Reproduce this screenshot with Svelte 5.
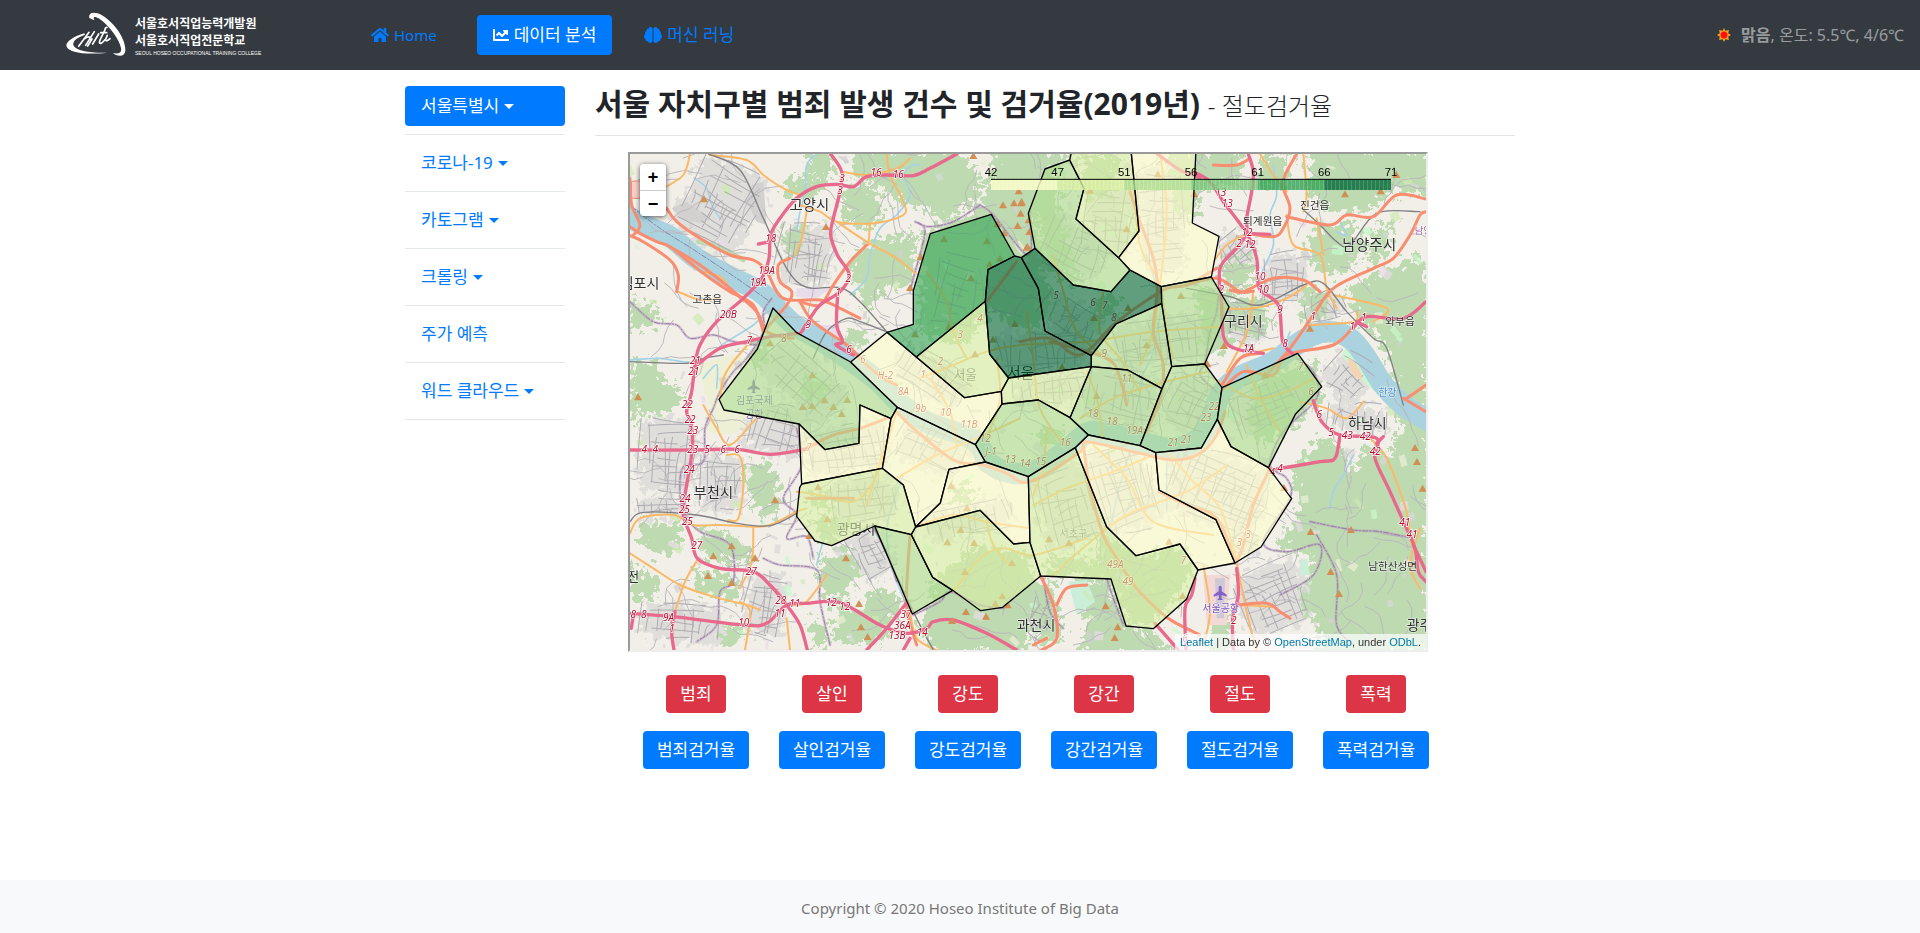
<script>
  const menu = [
    { label: '서울특별시', caret: true, active: true },
    { label: '코로나-19', caret: true },
    { label: '카토그램', caret: true },
    { label: '크롤링', caret: true },
    { label: '주가 예측' },
    { label: '워드 클라우드', caret: true }
  ];
  const crimes = ['범죄', '살인', '강도', '강간', '절도', '폭력'];

  // Map canvas: three units per screen pixel.
  const palette = ['#ffffcc', '#d9f0a3', '#addd8e', '#78c679', '#31a354', '#006837'];
  const ticks = [42, 47, 51, 56, 61, 66, 71];

  const districts = [
    { c: 2, p: '459,489 530,563 692,651 832,787 813,821 720,780 717,895 615,914 537,837 312,795 297,763 412,612' },
    { c: 0, p: '801,562 889,636 1034,758 1144,739 1146,777 1066,899 832,787 692,651' },
    { c: 4, p: '931,266 1114,208 1184,333 1104,374 1096,469 889,636 801,562 880,538 880,437' },
    { c: 1, p: '1096,469 1109,627 1166,699 1144,739 1034,758 889,636' },
    { c: 5, p: '1184,333 1204,338 1255,430 1275,558 1414,632 1414,665 1166,699 1109,627 1096,469 1104,374' },
    { c: 5, p: '1245,310 1360,420 1473,440 1530,375 1624,425 1625,476 1488,537 1414,632 1275,558 1255,430 1204,338' },
    { c: 2, p: '1349,45 1392,130 1368,222 1496,338 1530,375 1473,440 1360,420 1245,310 1225,205 1275,72' },
    { c: 1, p: '1349,45 1356,15 1533,15 1541,95 1557,258 1496,338 1368,222 1392,130' },
    { c: 0, p: '1533,15 1541,95 1557,258 1496,338 1530,375 1624,425 1774,396 1797,274 1717,234 1728,15' },
    { c: 2, p: '1624,425 1774,396 1827,486 1754,657 1655,665 1625,476' },
    { c: 2, p: '1625,476 1655,665 1626,731 1523,675 1414,665 1414,632 1488,537' },
    { c: 2, p: '1414,665 1523,675 1626,731 1560,902 1405,870 1350,818' },
    { c: 2, p: '1655,665 1754,657 1806,728 1792,823 1744,909 1607,923 1560,902 1626,731' },
    { c: 2, p: '1806,728 2033,625 2105,725 2026,808 1945,968 1833,905 1792,823' },
    { c: 1, p: '1166,699 1414,665 1350,818 1255,765 1146,777 1144,739' },
    { c: 2, p: '1146,777 1255,765 1350,818 1405,870 1366,908 1225,995 1096,951 1066,899' },
    { c: 0, p: '720,780 813,821 787,970 545,1017 537,837 615,914 717,895' },
    { c: 0, p: '832,787 1066,899 1096,951 987,973 961,1074 887,1146 850,1020 787,970 813,821' },
    { c: 1, p: '545,1017 787,970 850,1020 887,1146 874,1169 764,1143 635,1202 585,1188 530,1114 539,1028' },
    { c: 2, p: '764,1143 874,1169 938,1297 998,1336 877,1407' },
    { c: 0, p: '987,973 1096,951 1225,995 1230,1192 1181,1197 1080,1096 887,1146 961,1074' },
    { c: 1, p: '887,1146 1080,1096 1181,1197 1230,1192 1262,1293 1148,1387 1082,1397 998,1336 938,1297 874,1169' },
    { c: 1, p: '1225,995 1366,908 1460,1145 1548,1232 1680,1197 1734,1275 1700,1362 1600,1451 1518,1443 1473,1302 1262,1293 1230,1192' },
    { c: 0, p: '1366,908 1405,870 1560,902 1607,923 1617,1035 1788,1124 1845,1254 1734,1275 1680,1197 1548,1232 1460,1145' },
    { c: 0, p: '1607,923 1744,909 1792,823 1833,905 1945,968 2015,1061 1923,1206 1845,1254 1788,1124 1617,1035' }
  ];

  const forests = [
    '555,10 632,10 640,90 600,110 560,70',
    '480,130 560,80 610,120 590,160 500,170',
    '690,10 1010,10 1090,90 1070,160 980,230 900,190 840,170 770,120 700,90',
    '670,110 760,130 800,190 740,260 670,220',
    '1130,10 1370,10 1280,100 1240,230 1300,480 1240,570 1120,500 1040,600 900,560 905,270 1080,190',
    '480,260 560,240 545,330 500,340',
    '790,280 890,260 870,430 800,420 740,500 700,420 690,330',
    '670,560 740,540 740,600 680,620',
    '30,640 100,650 130,700 200,760 130,810 60,800 30,850',
    '30,460 90,480 130,520 60,560 30,540',
    '380,600 440,560 450,640 410,670',
    '560,690 640,720 600,770 540,760',
    '1230,100 1320,80 1310,190 1350,300 1380,420 1280,380',
    '1380,30 1500,30 1470,160 1390,170',
    '1640,20 1870,20 1850,110 1760,130 1720,240 1660,180',
    '1920,30 2010,30 1990,120 1920,140',
    '2070,10 2430,10 2430,150 2320,140 2240,200 2120,200 2060,130',
    '2080,250 2200,240 2240,300 2180,390 2100,380 2060,320',
    '2260,250 2330,230 2290,350 2240,360',
    '1810,340 1900,340 1910,410 1840,440 1800,400',
    '1720,420 1830,440 1840,600 1760,640 1740,520',
    '1840,450 1920,460 1960,540 1900,580 1830,540',
    '2050,430 2130,440 2120,520 2040,540',
    '2180,430 2400,330 2430,400 2430,800 2350,790 2290,600 2200,500',
    '2080,560 2180,540 2130,580 2050,600',
    '1440,440 1500,460 1480,520 1420,510',
    '1920,680 2090,660 2110,760 2030,840 1930,900 1880,820',
    '2010,980 2100,880 2180,910 2180,1000 2240,900 2330,930 2320,870 2430,860 2430,1530 2250,1530 2230,1420 2110,1450 2040,1380 2080,1230 1970,1210 2040,1090',
    '2080,1290 2260,1290 2260,1530 2100,1530',
    '1780,1420 1830,1400 1830,1530 1760,1530',
    '2320,770 2430,760 2430,880 2360,880',
    '1240,1310 1300,1320 1330,1480 1250,1500',
    '1370,1320 1470,1310 1520,1440 1600,1460 1680,1530 1380,1530 1400,1440',
    '1450,1160 1560,1240 1680,1200 1720,1290 1600,1440 1530,1430 1480,1320 1400,1300',
    '1280,1230 1400,1240 1420,1300 1280,1290',
    '950,1290 1080,1200 1230,1230 1250,1320 1220,1530 940,1530 900,1440',
    '760,1330 850,1350 830,1400 780,1500 700,1500 720,1380',
    '600,1240 690,1210 720,1290 650,1380 600,1330',
    '650,1380 740,1400 760,1500 640,1490',
    '560,1420 630,1450 620,1500 580,1500',
    '380,960 440,940 480,1010 470,1120 400,1100',
    '240,1150 330,1160 400,1230 380,1260 250,1240',
    '220,1270 340,1290 350,1370 240,1350',
    '60,1130 180,1140 190,1190 120,1240 60,1190',
    '30,1260 120,1300 100,1360 30,1370',
    '310,1440 370,1430 360,1500 300,1510',
    '560,1040 640,1030 640,1080 570,1090',
    '590,1120 690,1130 640,1190 590,1180',
    '1000,1010 1080,1030 1040,1080 990,1070',
    '1250,860 1330,850 1320,900 1260,900'
  ];

  const urban = [
    { x: 190, y: 50, w: 220, h: 260, a: 28, s: 22 },
    { x: 480, y: 240, w: 160, h: 180, a: 8, s: 20 },
    { x: 60, y: 820, w: 170, h: 220, a: 2, s: 24 },
    { x: 240, y: 930, w: 130, h: 170, a: 2, s: 20 },
    { x: 50, y: 1060, w: 160, h: 60, a: 0, s: 22 },
    { x: 380, y: 780, w: 180, h: 150, a: 16, s: 26 },
    { x: 380, y: 1290, w: 120, h: 180, a: 10, s: 22 },
    { x: 60, y: 1380, w: 250, h: 110, a: 6, s: 26 },
    { x: 700, y: 1150, w: 110, h: 150, a: -28, s: 20 },
    { x: 560, y: 840, w: 240, h: 140, a: -8, s: 24 },
    { x: 840, y: 820, w: 200, h: 160, a: 26, s: 24 },
    { x: 640, y: 1000, w: 190, h: 130, a: -10, s: 26 },
    { x: 920, y: 1080, w: 260, h: 90, a: -12, s: 26 },
    { x: 820, y: 640, w: 230, h: 110, a: 36, s: 22 },
    { x: 1130, y: 560, w: 260, h: 120, a: -4, s: 24 },
    { x: 1260, y: 470, w: 180, h: 100, a: 30, s: 28 },
    { x: 1180, y: 690, w: 220, h: 90, a: -6, s: 24 },
    { x: 1400, y: 680, w: 220, h: 160, a: 12, s: 26 },
    { x: 1480, y: 520, w: 300, h: 130, a: -8, s: 28 },
    { x: 1400, y: 120, w: 140, h: 220, a: 4, s: 28 },
    { x: 1560, y: 60, w: 130, h: 320, a: -4, s: 26 },
    { x: 1270, y: 230, w: 190, h: 160, a: 24, s: 26 },
    { x: 940, y: 330, w: 140, h: 220, a: 12, s: 30 },
    { x: 1640, y: 700, w: 140, h: 160, a: 20, s: 24 },
    { x: 1840, y: 700, w: 200, h: 150, a: -22, s: 24 },
    { x: 1800, y: 270, w: 110, h: 90, a: 50, s: 20 },
    { x: 1930, y: 330, w: 130, h: 140, a: 2, s: 20 },
    { x: 1820, y: 480, w: 120, h: 120, a: 10, s: 22 },
    { x: 2060, y: 450, w: 110, h: 80, a: -20, s: 22 },
    { x: 2120, y: 630, w: 130, h: 130, a: 40, s: 24 },
    { x: 2120, y: 780, w: 180, h: 80, a: 10, s: 22 },
    { x: 1640, y: 930, w: 300, h: 210, a: 22, s: 22 },
    { x: 1420, y: 900, w: 180, h: 260, a: -18, s: 20 },
    { x: 1250, y: 960, w: 170, h: 240, a: -16, s: 24 },
    { x: 1860, y: 1260, w: 210, h: 200, a: -22, s: 24 },
    { x: 1230, y: 1350, w: 70, h: 120, a: 20, s: 20 },
    { x: 1830, y: 1150, w: 90, h: 80, a: 20, s: 20 },
    { x: 420, y: 640, w: 260, h: 140, a: 40, s: 36 }
  ];

  function seeded(seed) {
    let s = seed;
    return () => {
      s = (s * 16807) % 2147483647;
      return s / 2147483647;
    };
  }

  function streets(b, i) {
    const r = seeded(i * 977 + 13);
    let d = '';
    for (let x = 0; x <= b.w; x += b.s) {
      const from = Math.round(r() * b.h * 0.5);
      const to = Math.round(b.h - r() * b.h * 0.4);
      const k = Math.round((r() - 0.5) * 30);
      d += `M${b.x + x} ${b.y + from}Q${b.x + x + k} ${b.y + Math.round(b.h / 2)} ${b.x + x + k} ${b.y + to}`;
    }
    for (let y = 0; y <= b.h; y += b.s) {
      const from = Math.round(r() * b.w * 0.5);
      const to = Math.round(b.w - r() * b.w * 0.4);
      const k = Math.round((r() - 0.5) * 30);
      d += `M${b.x + from} ${b.y + y}Q${b.x + Math.round(b.w / 2)} ${b.y + y + k} ${b.x + to} ${b.y + y + k}`;
    }
    return d;
  }

  // Meandering lanes that fill the ground between the larger roads.
  const lanes = (() => {
    const r = seeded(4242);
    let d = '';
    for (let i = 0; i < 330; i++) {
      let x = Math.round(30 + r() * 2380);
      let y = Math.round(27 + r() * 1480);
      let a = r() * 6.28;
      d += `M${x} ${y}`;
      for (let k = 0; k < 5; k++) {
        a += (r() - 0.5) * 1.3;
        x = Math.round(x + Math.cos(a) * 26);
        y = Math.round(y + Math.sin(a) * 26);
        d += `L${x} ${y}`;
      }
    }
    return d;
  })();

  const scatter = (() => {
    const r = seeded(99);
    const kinds = ['#d9d8d8', '#c8facc', '#d3d0d0', '#ebdbe8', '#cdebb0', '#eef0d5'];
    return Array.from({ length: 260 }, () => ({
      x: Math.round(30 + r() * 2360),
      y: Math.round(27 + r() * 1460),
      w: Math.round(8 + r() * 30),
      h: Math.round(6 + r() * 22),
      a: Math.round(r() * 90),
      f: kinds[Math.floor(r() * kinds.length)]
    }));
  })();

  // Rounds a list of points into one smooth path.
  function smooth(text) {
    const p = text.split(' ').map((q) => q.split(',').map(Number));
    let d = `M${p[0]}`;
    for (let i = 0; i < p.length - 1; i++) {
      const a = p[i - 1] ?? p[i];
      const b = p[i];
      const c = p[i + 1];
      const e = p[i + 2] ?? c;
      d += `C${b[0] + (c[0] - a[0]) / 6} ${b[1] + (c[1] - a[1]) / 6} ${c[0] - (e[0] - b[0]) / 6} ${c[1] - (e[1] - b[1]) / 6} ${c[0]} ${c[1]}`;
    }
    return d;
  }

  const river =
    '10,205 70,240 150,275 230,340 330,395 420,440 480,500 530,545 600,585 690,645 770,705 840,775 920,830 1060,885 1110,955 1180,985 1250,975 1340,915 1385,875 1430,860 1560,890 1650,910 1730,885 1775,820 1800,750 1850,700 1960,650 2050,585 2120,560 2190,580 2240,640 2290,720 2350,780 2430,830';
  const streams = [
    '225,100 260,130 275,180 300,220', '590,27 560,60 555,140 540,200 530,260', '900,60 880,60 850,90 870,150 830,210 780,250 750,330 740,400 690,450',
    '30,645 120,640 230,650 320,590 400,540 440,500', '290,730 290,660 250,700', '1960,60 1970,150 1950,210 1960,300 1920,400 1940,440',
    '2160,230 2180,270 2150,260', '2200,930 2170,990 2140,1040 2130,1090', '620,1160 600,1220 590,1260', '2010,560 1980,640', '1640,1100 1640,900',
    '850,990 820,1070 800,1160 820,1280 870,1400', '1580,330 1620,480 1600,620 1560,720 1570,880', '1470,1150 1500,1020 1530,920'
  ];

  const primary = [
    '210,27 190,90 130,130', '270,30 380,45 430,90 490,130 540,150', '560,200 545,280 525,330', '665,80 740,90 830,70 870,40', '800,27 810,90 850,170 850,210 760,235 650,230 600,200 540,180',
    '650,230 740,290 830,340 885,385', '750,240 745,300', '240,380 300,395 330,430 370,470', '175,440 240,465 300,460', '300,760 310,700 340,650 400,580',
    '250,780 290,850 330,900 400,830 430,800', '320,930 360,935 370,1020 355,1120 325,1125', '30,1165 60,1120 160,1110 220,1140 300,1140 400,1145 450,1140 530,1100 560,1090',
    '400,1150 395,1250 360,1330', '30,1225 100,1270 180,1320 280,1355 380,1380 420,1395', '235,1240 195,1310 165,1400', '360,1370 390,1400 375,1515', '510,1515 500,1420',
    '530,1040 600,1050 700,1070 760,1010 800,900 820,830', '740,1080 780,950 830,800', '830,1000 950,930 1070,880 1200,820', '900,1140 1000,1110 1100,1130 1230,1150',
    '1000,1340 1080,1240 1150,1210 1240,1230 1400,1180', '900,700 1000,660 1100,620 1200,600 1400,590 1600,560 1800,545', '1130,640 1140,760 1100,880', '1220,500 1240,640 1260,790 1330,900',
    '1300,330 1330,440 1370,560 1460,640', '1450,440 1440,560 1500,640 1560,740', '1540,100 1560,300 1620,420 1640,560 1660,640', '1620,27 1640,200 1620,420 1600,560 1560,660',
    '1380,820 1480,760 1600,720 1760,680', '1400,680 1430,760 1450,880', '1280,850 1270,960 1240,1050', '1240,1080 1340,1030 1480,980 1600,930',
    '1300,1290 1400,1200 1520,1110 1700,1040 1820,960', '1650,930 1720,1010 1800,1090 1850,1250', '1420,900 1520,1000 1600,1130 1780,1170', '1780,700 1900,760 2000,740 2080,700', '1880,660 1920,760 1980,860',
    '1920,27 1960,90 2000,140', '2050,27 2060,150 2050,200', '2000,210 2020,300 2100,330 2120,430 2150,490', '1900,440 1880,560 1820,680', '1780,350 1820,300 1880,265',
    '1800,490 1900,490 2000,460 2060,420', '2070,540 2200,530 2210,500', '1960,610 1870,630', '2090,220 2110,330', '2140,450 2300,490 2260,530', '2250,880 2300,940 2360,1100 2370,1180 2390,1230',
    '2040,770 2120,790 2180,820 2230,770', '1750,1260 1770,1400 1750,1500', '1850,1254 1880,1400 1910,1515', '1850,1380 1960,1385', '2400,1150 2370,1260 2400,1330', '870,1400 890,1480 950,1515',
    '620,1290 560,1370 520,1380', '930,700 990,800 1010,900', '1100,1130 1120,1200 1170,1260', '920,380 980,470 1000,560 1040,640'
  ];
  const trunk = [
    '30,245 60,265 110,290 150,305 200,345 270,400 330,440 400,480 430,560', '30,100 35,180 60,240 40,270', '140,190 170,230 240,280 330,330 400,345 440,380 490,460 600,465 660,490 720,520',
    '30,272 70,290 150,345 175,390 170,440', '150,305 240,360 330,430 410,500 440,560 520,580', '740,300 690,350 640,420 600,480 540,470', '510,340 475,360 480,410 515,440 500,480 430,560', '540,470 580,530 680,600 740,660 790,700 830,720',
    '560,910 640,870 720,850 800,820', '830,800 880,850 1000,945 1090,960 1160,985 1230,1010 1380,920 1400,890 1560,925 1660,945 1740,925 1790,870 1815,800', '1200,590 1290,580 1380,630 1480,540 1560,480 1640,430 1700,420 1790,370',
    '1700,420 1790,400 1860,440 1900,438', '1530,140 1560,230 1600,340 1612,430 1600,560 1630,660 1620,760 1580,860', '1290,590 1460,640 1500,700 1520,780', '1390,900 1410,1030 1450,1170 1490,1240 1550,1330 1620,1400 1660,1430 1740,1470',
    '1617,1040 1700,1080 1790,1120 1845,1250', '1950,970 1900,1080 1870,1200 1850,1250', '1260,1290 1300,1380 1310,1480 1265,1515', '1310,1380 1340,1330 1400,1320', '1280,1480 1240,1500',
    '1780,60 1850,60 1890,40', '2030,27 1995,90 1990,130 2010,190 1990,250 1960,275 1880,265', '2000,215 2130,240 2180,210 2260,215 2330,150 2418,162', '2418,200 2400,210 2370,270 2320,340 2260,370 2140,430 2080,510 2010,610 1930,700',
    '1830,435 1870,440 1960,400 2050,405 2100,440', '1806,720 1860,640 1920,625', '1806,735 1870,680 1960,690 2000,630 2140,600 2200,545', '1190,350 1100,470', '560,1060 700,1060', '870,1170 860,1380 890,1500',
    '2350,760 2418,800', '2418,720 2360,760', '1850,1380 1940,1375 1980,1400 2010,1420'
  ];
  const motorway = [
    '632,27 665,80 660,140 640,220 632,270 652,330 688,390 660,440 600,480 570,520 545,560', '1010,27 930,70 880,92 800,90 740,95 700,125 650,118 590,125 530,160 480,220 452,270 447,340 425,400 370,460 290,530 240,600 225,660 215,740 200,800 212,830 218,890 212,950 195,1050 190,1110 215,1180 232,1240 300,1270 400,1280 450,1320 500,1380 540,1440 562,1515',
    '225,665 300,610 380,590 450,575 540,565', '30,915 220,915 350,913 450,928 560,912', '30,1405 160,1415 370,1440 440,1435 500,1380 560,1375 660,1373 780,1440 860,1465 920,1450 940,1430 1000,1425 1100,1465 1190,1515', '165,1400 155,1460 162,1515', '740,1515 800,1450 862,1370', '653,450 650,540 668,590 648,600 700,630', '450,290 415,297', '40,1410 34,1450',
    '1610,25 1680,75 1740,98', '1885,27 1900,80 1895,140 1880,220 1880,265 1850,310 1800,370 1805,480 1812,580 1850,612 1930,625', '1720,80 1770,110 1810,170 1880,265 1910,340 1918,430 1975,480 1988,590 2020,628', '1880,265 1950,268', '2200,548 2240,515 2350,520 2418,470', '2210,530 2240,545',
    '2080,767 2105,830 2160,870 2270,880 2265,940 2310,1040 2355,1140 2385,1210 2395,1280 2418,1310', '2380,1200 2418,1280', '2160,870 2145,940 2100,950 1970,972', '2290,875 2270,895', '1850,1270 1855,1350 1838,1420 1840,1515', '1725,1300 1715,1350 1695,1390 1698,1515', '1605,1435 1675,1515', '870,1480 850,1515'
  ];
  const rail = [
    '265,27 360,75 430,220 500,370 560,427 660,428 720,470 800,560', '580,640 620,560 680,520 720,530 800,560', '30,1130 70,1102 230,1110 350,1135 450,1142 530,1105', '30,650 200,655 250,640 310,630',
    '2045,190 2100,240 2150,290 2190,300 2270,205 2400,200', '1700,430 1830,455 1920,480 2050,420 2110,415 2180,500 2260,580 2300,610 2350,780', '760,1140 880,1400 940,1515'
  ];
  const borders = [
    '1080,180 1120,210 1225,330 1230,200', '1080,180 1000,230 925,245 885,230 915,260 880,400 870,440', '30,470 100,530 170,540 210,580 280,570 340,590 410,600', '455,460 430,500 430,560 380,640 340,680 300,740 280,790 255,850 250,950 190,965 180,1040 195,1110 240,1160 330,1200 340,1310 300,1340 290,1440 230,1490',
    '530,850 545,960 490,1060 530,1110 500,1180 560,1175 580,1240', '760,1150 800,1220 830,1310', '880,1410 960,1370 990,1340 1080,1380 1150,1390', '430,1240 480,1260 590,1275 600,1370 630,1500', '1270,1300 1290,1400 1330,1450', '1460,1300 1480,1360 1510,1440',
    '2030,640 2080,680 2090,760 1990,860 1950,960 2000,1000 2010,1060 1930,1190 2000,1220 2100,1200 2080,1290 1980,1350', '2070,1130 2200,1155 2280,1160 2380,1180', '2090,1170 2150,1290 2150,1440 2200,1500', '1800,390 1790,500 1770,560 1755,650 1740,690 1790,740'
  ];

  const peaks = [
    [252, 162], [618, 245], [1060, 32], [1196, 138], [1149, 180], [1182, 174], [1204, 174], [1202, 205], [1193, 242], [1222, 305], [1152, 264], [1132, 236], [972, 282], [1101, 288], [1140, 340], [1109, 357], [1053, 398], [902, 336], [870, 428], [986, 544], [885, 567], [1065, 627], [1184, 536], [1119, 583], [450, 594], [577, 690], [614, 765], [682, 764], [54, 756],
    [548, 785], [576, 782], [665, 806], [640, 785], [465, 1065], [594, 1026], [622, 1122], [568, 1172], [335, 1203], [280, 1233], [405, 1239], [264, 1292], [335, 1313], [678, 1239], [717, 1376], [723, 1446], [743, 1475], [993, 1022], [1041, 1089], [1022, 1154], [982, 1191], [1062, 1193], [1035, 1280], [1176, 1254], [1163, 1380], [1147, 1353], [1126, 1375], [1038, 1400], [1098, 1414], [996, 1427],
    [1205, 170], [1226, 225], [1228, 260], [1220, 307], [1410, 136], [1613, 87], [1520, 252], [1722, 147], [1683, 452], [1524, 488], [1422, 518], [1580, 600], [1326, 666], [1430, 752], [1812, 602], [1762, 657], [1935, 690], [2070, 550], [2175, 147], [2282, 138], [2329, 89], [2385, 908], [2391, 950], [2408, 1030], [1992, 1028], [2072, 1160], [2193, 1154], [2132, 1280], [2157, 1346], [1457, 1383], [1493, 1446], [1484, 1478], [1287, 1182], [1347, 1194], [1647, 1189], [1688, 1352]
  ];

  const refs = [
    ['3', 666, 112], ['3', 660, 146], ['16', 768, 94], ['16', 835, 100], ['18', 452, 291], ['19A', 440, 386], ['19A', 414, 423], ['2', 685, 410], ['1', 655, 452], ['20B', 325, 519], ['9', 565, 549], ['8', 491, 592], ['7', 388, 597], ['6', 687, 624], ['6', 728, 653], ['21', 226, 656], ['21', 221, 691], ['H-2', 796, 701], ['8A', 850, 750], ['1', 909, 698], ['2', 961, 660], ['3', 1021, 580], ['4', 1080, 530],
    ['22', 202, 788], ['22', 210, 833], ['23', 218, 868], ['23', 218, 923], ['4', 73, 923], ['4', 106, 923], ['5', 261, 923], ['6', 310, 923], ['6', 352, 923], ['24', 208, 985], ['24', 195, 1071], ['25', 193, 1103], ['25', 202, 1139], ['27', 230, 1211], ['27', 394, 1291], ['28', 482, 1378], ['11', 524, 1387], ['11', 480, 1416], ['12', 634, 1384], ['12', 674, 1396], ['10', 371, 1443], ['8', 40, 1419], ['8', 71, 1419], ['9A', 146, 1427], ['1', 156, 1460], ['37', 858, 1419], ['36A', 847, 1451], ['13B', 831, 1481], ['14', 907, 1472], ['7', 567, 918], ['9b', 902, 801], ['10', 977, 814], ['11B', 1047, 850], ['12', 1096, 890], ['J-1', 1113, 929], ['13', 1171, 953], ['14', 1215, 965], ['15', 1262, 961], ['16', 1336, 902],
    ['13', 1802, 154], ['13', 1822, 186], ['12', 1881, 274], ['2', 1857, 307], ['12', 1890, 308], ['10', 1920, 404], ['10', 1930, 444], ['9', 1980, 504], ['1', 2080, 524], ['8', 1995, 606], ['1A', 1886, 621], ['1', 2231, 528], ['1', 2197, 556], ['2', 1804, 444], ['5', 1308, 463], ['6', 1419, 482], ['7', 1454, 491], ['8', 1481, 528], ['9', 1453, 637], ['11', 1520, 712], ['18', 1419, 816], ['18', 1476, 841], ['19A', 1544, 867], ['21', 1659, 903], ['21', 1699, 893], ['23', 1758, 829], ['22', 1782, 795], ['7', 2042, 676], ['6', 2073, 750], ['6', 2098, 818], ['5', 2133, 872], ['43', 2182, 881], ['42', 2236, 884], ['42', 2266, 930], ['4', 1980, 982], ['4', 1957, 992], ['3', 1884, 1178], ['3', 1858, 1202], ['2', 1841, 1437], ['6', 1695, 1490], ['49A', 1486, 1270], ['49', 1524, 1320], ['41', 2354, 1142], ['41', 2376, 1180], ['7', 1690, 1258]
  ];

  const places = [
    ['고양시', 568, 194, 43, '#2e2e2e'], ['김포시', 60, 428, 42, '#2e2e2e'], ['고촌읍', 262, 475, 32, '#2e2e2e'], ['부천시', 280, 1058, 43, '#2e2e2e'], ['과천시', 1248, 1456, 42, '#2e2e2e'],
    ['하남시', 2242, 848, 42, '#2e2e2e'], ['구리시', 1870, 544, 42, '#2e2e2e'], ['남양주시', 2248, 315, 44, '#2e2e2e'], ['퇴계원읍', 1928, 241, 32, '#2e2e2e'], ['진건읍', 2084, 191, 32, '#2e2e2e'],
    ['와부읍', 2340, 539, 32, '#2e2e2e'], ['남한산성면', 2318, 1274, 32, '#2e2e2e'], ['광주시', 2418, 1456, 42, '#2e2e2e'], ['서울', 1202, 698, 44, '#111'], ['광명시', 708, 1168, 42, '#2e2e2e'], ['전', 40, 1308, 38, '#2e2e2e'],
    ['서울', 1036, 703, 38, '#5e5e5a'], ['서초구', 1360, 1175, 30, '#77748a'], ['김포국제', 403, 776, 30, '#6a52a0'], ['공항', 403, 818, 30, '#6a52a0'], ['서울공항', 1802, 1401, 30, '#7b57c0'], ['한강', 2302, 752, 30, '#4f8fc6'], ['남양', 2410, 266, 28, '#9a62a8']
  ];
</script>

<div class="page">
  <header class="navbar">
    <a class="brand" href="#home" aria-label="서울호서직업전문학교">
      <svg class="emblem" viewBox="0 0 180 135" aria-hidden="true">
        <path d="M70 18C66 2 84-3 108 10C148 34 180 84 178 116C176 132 164 134 148 128L141 123C158 127 168 122 165 108C160 82 130 40 100 20C86 12 80 13 85 25Z" />
        <path d="M55 64C20 74-4 92 2 104C8 120 54 130 124 122C76 124 30 116 23 101C17 88 34 76 57 68Z" />
        <path class="stroke" d="M69 61L38 103M85 59L59 100M53 82C65 72 77 73 73 82M78 81L65 102M98 66L80 96M118 48C118 58 103 76 100 91Q103 100 116 84M104 62L122 62M124 70L118 84Q121 90 132 80M118 48l5-2" />
      </svg>
      <span class="brand-text">
        <span class="brand-line">서울호서직업능력개발원</span>
        <span class="brand-line">서울호서직업전문학교</span>
        <span class="brand-small">SEOUL HOSEO OCCUPATIONAL TRAINING COLLEGE</span>
      </span>
    </a>
    <nav class="links">
      <a class="pill home" href="#home">
        <svg class="icon" viewBox="0 0 576 512" aria-hidden="true"><path d="M280.37 148.26L96 300.11V464a16 16 0 0 0 16 16l112.06-.29a16 16 0 0 0 15.92-16V368a16 16 0 0 1 16-16h64a16 16 0 0 1 16 16v95.64a16 16 0 0 0 16 16.05L464 480a16 16 0 0 0 16-16V300L295.67 148.26a12.19 12.19 0 0 0-15.3 0zM571.6 251.47L488 182.56V44.05a12 12 0 0 0-12-12h-56a12 12 0 0 0-12 12v72.61L318.47 43a48 48 0 0 0-61 0L4.34 251.47a12 12 0 0 0-1.6 16.9l25.5 31A12 12 0 0 0 45.15 301l235.22-193.74a12.19 12.19 0 0 1 15.3 0L530.9 301a12 12 0 0 0 16.9-1.6l25.5-31a12 12 0 0 0-1.7-16.93z" /></svg>
        <span class="latin">Home</span>
      </a>
      <a class="pill active" href="#analysis">
        <svg class="icon narrow" viewBox="0 0 512 512" aria-hidden="true"><path d="M496 384H64V80c0-8.84-7.16-16-16-16H16C7.16 64 0 71.16 0 80v336c0 17.67 14.33 32 32 32h464c8.84 0 16-7.16 16-16v-32c0-8.84-7.16-16-16-16zM464 96H345.94c-21.38 0-32.09 25.85-16.97 40.97l32.4 32.4L288 242.75l-73.37-73.37c-12.5-12.5-32.76-12.5-45.25 0l-68.69 68.69c-6.25 6.25-6.25 16.38 0 22.63l22.62 22.62c6.25 6.25 16.38 6.25 22.63 0L192 237.25l73.37 73.37c12.5 12.5 32.76 12.5 45.25 0l96-96 32.4 32.4c15.12 15.12 40.97 4.41 40.97-16.97V112c.01-8.84-7.15-16-15.99-16z" /></svg>
        데이터 분석
      </a>
      <a class="pill" href="#learning">
        <svg class="icon" viewBox="0 0 576 512" aria-hidden="true">
          <path d="M208 0c-29.9 0-54.7 20.5-61.8 48.2-.8 0-1.4-.2-2.2-.2-35.3 0-64 28.7-64 64 0 4.8.6 9.5 1.7 14C52.5 138 32 166.6 32 200c0 12.6 3.2 24.3 8.3 34.9C16.3 248.7 0 274.3 0 304c0 33.3 20.4 61.9 49.4 73.9-.9 4.6-1.4 9.3-1.4 14.1 0 39.8 32.2 72 72 72 4.1 0 8.1-.5 12-1.2 9.6 28.5 36.2 49.2 68 49.2 39.8 0 72-32.2 72-72V64c0-35.3-28.7-64-64-64z" />
          <path transform="matrix(-1 0 0 1 576 0)" d="M208 0c-29.9 0-54.7 20.5-61.8 48.2-.8 0-1.4-.2-2.2-.2-35.3 0-64 28.7-64 64 0 4.8.6 9.5 1.7 14C52.5 138 32 166.6 32 200c0 12.6 3.2 24.3 8.3 34.9C16.3 248.7 0 274.3 0 304c0 33.3 20.4 61.9 49.4 73.9-.9 4.6-1.4 9.3-1.4 14.1 0 39.8 32.2 72 72 72 4.1 0 8.1-.5 12-1.2 9.6 28.5 36.2 49.2 68 49.2 39.8 0 72-32.2 72-72V64c0-35.3-28.7-64-64-64z" />
        </svg>
        머신 러닝
      </a>
    </nav>
    <p class="weather">
      <svg class="sun" viewBox="0 0 16 16" aria-hidden="true">
        <path d="M8 0l1.5 3.2L13.600 2.400l-.8 3.500L16 8l-3.200 2.100.8 3.500-4.100-.8L8 16l-1.500-3.200-4.100.8.8-3.500L0 8l3.200-2.100-.8-3.500 4.100.8z" fill="#f6a02c" />
        <circle cx="8" cy="8" r="4" fill="#fb1208" />
      </svg>
      <span><b>맑음</b>, 온도: 5.5℃, 4/6℃</span>
    </p>
  </header>

  <div class="container">
    <aside class="sidebar">
      <ul>
        {#each menu as item}
          <li>
            <a class="side-link" class:active={item.active} href="#menu">{item.label}{#if item.caret}<i class="caret"></i>{/if}</a>
          </li>
        {/each}
      </ul>
    </aside>

    <main class="content">
      <h1>서울 자치구별 범죄 발생 건수 및 검거율(2019년) <small>- 절도검거율</small></h1>

      <section class="map" aria-label="서울 자치구별 절도검거율 지도">
        <svg class="canvas" viewBox="30 27 2388 1488" preserveAspectRatio="xMidYMid slice">
          <defs>
            <filter id="rough" x="-20%" y="-20%" width="140%" height="140%">
              <feTurbulence type="fractalNoise" baseFrequency="0.05" numOctaves="3" seed="4" />
              <feDisplacementMap in="SourceGraphic" scale="95" xChannelSelector="R" yChannelSelector="G" />
            </filter>
          </defs>
          <rect x="30" y="27" width="2388" height="1488" fill="#f2efe9" />
          <path d="M230 660L330 630 400 640 300 760 330 790 540 840 530 870 420 830 330 870 260 860 270 790Z" fill="#eef0d5" />
          <g fill="#e0dedb" filter="url(#rough)">
            {#each urban as b}
              <rect x={b.x} y={b.y} width={b.w} height={b.h} rx="30" transform={`rotate(${b.a} ${b.x + b.w / 2} ${b.y + b.h / 2})`} />
            {/each}
          </g>
          <path d="M155 190L200 170 260 210 255 235 190 225Z M395 120L430 110 440 240 410 230 380 170Z" fill="#d3d0d0" />
          <path d="M530 430L640 425 590 460 530 455Z M590 540L660 540 650 590Z" fill="#e8dce8" />
          <g fill="#bddab1" filter="url(#rough)">
            {#each forests as f}<polygon points={f} />{/each}
          </g>
          <path d="M2165 630L2180 600 2230 640 2270 700 2280 750 2240 720Z" fill="#cdf5d0" />
          <path d="M1750 1290L1830 1290 1820 1440 1760 1440Z" fill="#f3d9d5" />
          <path d="M1785 1300L1815 1300 1812 1420 1790 1420Z" fill="#cfc9d6" />
          <path d="M1345 1310L1400 1305 1425 1370 1370 1410Z M2040 1250L2060 1240 2070 1290 2040 1290Z" fill="#cbeed8" />
          {#each scatter as s}
            <rect x={s.x} y={s.y} width={s.w} height={s.h} fill={s.f} opacity="0.7" transform={`rotate(${s.a} ${s.x} ${s.y})`} />
          {/each}
          <g class="line">
            <path d={smooth(river)} stroke="#aad3df" stroke-width="64" />
            <path d="M235 290Q300 300 370 345" stroke="#bddab1" stroke-width="14" />
            {#each streams as s}<path d={smooth(s)} stroke="#a5d3e6" stroke-width="5" />{/each}
            <path d={lanes} stroke="#bbb9bd" stroke-width="3" />
            {#each urban as b, i}
              <path d={streets(b, i)} stroke="#aeacb1" stroke-width="3" transform={`rotate(${b.a} ${b.x + b.w / 2} ${b.y + b.h / 2})`} />
            {/each}
            {#each borders as b}
              <path d={smooth(b)} stroke="#b79fbd" stroke-width="8" opacity="0.55" />
              <path d={smooth(b)} stroke="#9a7ca5" stroke-width="3" stroke-dasharray="16 6 4 6" />
            {/each}
            <path d={smooth('35,185 120,250 230,320 350,400 450,470')} stroke="#8a80ad" stroke-width="3" stroke-dasharray="16 6 4 6" />
            {#each primary as r}<path d={smooth(r)} stroke="#fbb967" stroke-width="6" />{/each}
            {#each rail as r}<path d={smooth(r)} stroke="#808083" stroke-width="4" />{/each}
            {#each trunk as r}<path d={smooth(r)} stroke="#f98d70" stroke-width="9" />{/each}
            {#each motorway as r}<path d={smooth(r)} stroke="#e8698c" stroke-width="10" />{/each}
          </g>
          <path d="M2185 640C2200 640 2236 690 2222 704C2200 700 2180 664 2185 640Z" fill="#f3d5b5" />
          <g fill="#d08f55">
            {#each peaks as [x, y]}<path d={`M${x} ${y - 11}l12 21h-24z`} />{/each}
          </g>
          <path d="M401 702l4 8v11l14 9v5l-14-4-1 8 4 5h-14l4-5-1-8-14 4v-5l14-9v-11z" fill="#7b66b0" />
          <path d="M600 560q5-7 9 0v13l15 10v6l-15-5-1 9 5 6h-17l5-6-1-9-15 5v-6l15-10z" fill="#8461c4" transform="translate(1196 766)" />
          <rect x="34" y="108" width="70" height="52" rx="6" fill="#f7cfc6" stroke="#e08c7c" stroke-width="3" />
          <g class="ref">
            {#each refs as [t, x, y]}<text {x} {y}>{t}</text>{/each}
          </g>
          <g class="place">
            {#each places as [t, x, y, s, f]}<text {x} {y} font-size={s} fill={f}>{t}</text>{/each}
          </g>

          <g stroke="#000" stroke-width="4" stroke-linejoin="round" fill-opacity="0.6">
            {#each districts as d}<polygon points={d.p} fill={palette[d.c]} />{/each}
          </g>

          {#each palette as c, i}
            <rect x={1113 + i * 200} y="103" width="200" height="32" fill={c} opacity="0.8" />
          {/each}
          <path d="M1113 119H2313" stroke="#fff" stroke-width="32" stroke-dasharray="2 10" opacity="0.25" />
          <path d="M1113 103H2313" stroke="#000" stroke-width="3" />
          <g class="tick">
            {#each ticks as t, i}<text x={1113 + i * 200} y="92">{t}</text>{/each}
          </g>
        </svg>
        <div class="zoom">
          <button type="button" aria-label="Zoom in">+</button>
          <button type="button" aria-label="Zoom out">−</button>
        </div>
        <p class="credit"><a href="#leaflet">Leaflet</a> | Data by © <a href="#osm">OpenStreetMap</a>, under <a href="#odbl">ODbL</a>.</p>
      </section>

      <div class="choices">
        {#each crimes as c}<button type="button" class="btn red">{c}</button>{/each}
        {#each crimes as c}<button type="button" class="btn blue">{c}검거율</button>{/each}
      </div>
    </main>
  </div>

  <footer>Copyright © 2020 Hoseo Institute of Big Data</footer>
</div>

<style>
  :global(body) {
    margin: 0;
    background: #fff;
  }
  .page {
    min-height: 100vh;
    display: flex;
    flex-direction: column;
    font-family: 'Noto Sans', 'Noto Sans CJK KR', sans-serif;
    font-size: 17px;
    line-height: 24px;
    color: #212529;
  }
  h1,
  p,
  ul {
    margin: 0;
    padding: 0;
  }
  a {
    text-decoration: none;
    color: #007bff;
  }
  .navbar {
    display: flex;
    align-items: center;
    height: 70px;
    padding: 0 16px 0 66px;
    background: #343a40;
  }
  .brand {
    display: flex;
    gap: 9px;
    width: 289px;
    color: #fff;
  }
  .emblem {
    width: 60px;
    height: 45px;
    fill: #fff;
  }
  .emblem .stroke {
    fill: none;
    stroke: #fff;
    stroke-width: 5;
    stroke-linecap: round;
  }
  .brand-text {
    display: flex;
    flex-direction: column;
    padding-top: 2px;
    white-space: nowrap;
  }
  .brand-line {
    font-size: 12px;
    line-height: 17px;
    font-weight: 700;
    font-family: 'Noto Sans CJK KR', sans-serif;
  }
  .brand-small {
    font-family: 'Liberation Sans', sans-serif;
    font-size: 5px;
    line-height: 10px;
  }
  .links {
    display: flex;
    gap: 16px;
  }
  .pill {
    display: flex;
    align-items: center;
    gap: 5px;
    padding: 8px 16px;
    border-radius: 4px;
    white-space: nowrap;
  }
  .home {
    margin-right: 8px;
  }
  .latin {
    font-size: 15px;
  }
  .active {
    background: #007bff;
    color: #fff;
  }
  .icon {
    width: 18px;
    height: 16px;
    fill: currentColor;
  }
  .icon.narrow {
    width: 16px;
  }
  .weather {
    display: flex;
    align-items: center;
    gap: 10px;
    margin-left: auto;
    font-size: 16px;
    color: rgba(255, 255, 255, 0.5);
  }
  .sun {
    width: 14px;
    height: 14px;
  }
  .container {
    flex: 1;
    display: flex;
    gap: 30px;
    width: 100%;
    max-width: 1110px;
    margin: 0 auto;
    padding-top: 16px;
    box-sizing: border-box;
  }
  .sidebar {
    width: 160px;
    flex: none;
  }
  .sidebar ul {
    list-style: none;
  }
  .sidebar li {
    padding-bottom: 8px;
    margin-bottom: 8px;
    border-bottom: 1px solid #e5e8eb;
  }
  .side-link {
    display: flex;
    align-items: center;
    gap: 5px;
    padding: 8px 16px;
    border-radius: 4px;
  }
  .caret {
    border: 5px solid transparent;
    border-top-color: currentColor;
    border-bottom: 0;
  }
  .content {
    flex: 1;
    min-width: 0;
  }
  h1 {
    padding-bottom: 11px;
    border-bottom: 1px solid #e5e5e5;
    font-size: 30px;
    line-height: 36px;
    font-weight: 700;
  }
  h1 small {
    font-size: 24px;
    font-weight: 300;
  }
  .map {
    position: relative;
    width: 100%;
    max-width: 800px;
    aspect-ratio: 8 / 5;
    margin: 16px 0 0 33px;
    box-sizing: border-box;
    border: 2px solid;
    border-color: #9a9a9a #eee #eee #9a9a9a;
    overflow: hidden;
  }
  .canvas {
    display: block;
    width: 100%;
    height: 100%;
  }
  .line {
    fill: none;
    stroke-linecap: round;
    stroke-linejoin: round;
  }
  .canvas text {
    text-anchor: middle;
  }
  .ref text {
    font-size: 30px;
    font-style: italic;
    fill: #b0102c;
    stroke: #fff;
    stroke-width: 4;
    paint-order: stroke;
  }
  .place text {
    stroke: #fff;
    stroke-opacity: 0.6;
    stroke-width: 4;
    paint-order: stroke;
  }
  .tick text {
    font-family: 'Liberation Sans', sans-serif;
    font-size: 34px;
  }
  .zoom {
    position: absolute;
    top: 10px;
    left: 10px;
    display: flex;
    flex-direction: column;
    border-radius: 4px;
    box-shadow: 0 1px 5px rgba(0, 0, 0, 0.65);
    overflow: hidden;
  }
  .zoom button {
    width: 26px;
    height: 26px;
    padding: 0;
    border: 0;
    background: #fff;
    color: #000;
    font: 700 18px/26px 'Liberation Sans', sans-serif;
  }
  .zoom button + button {
    border-top: 1px solid #ccc;
  }
  .credit {
    position: absolute;
    right: 0;
    bottom: 0;
    padding: 0 5px;
    background: rgba(255, 255, 255, 0.7);
    font: 11px/16px 'Liberation Sans', sans-serif;
    color: #333;
  }
  .credit a {
    color: #0078a8;
  }
  .choices {
    display: grid;
    grid-template-columns: repeat(6, 1fr);
    justify-items: center;
    row-gap: 18px;
    max-width: 816px;
    margin: 23px 0 48px 33px;
  }
  .btn {
    height: 38px;
    padding: 0 14px;
    border: 0;
    border-radius: 4px;
    color: #fff;
    font: 17px/24px 'Noto Sans', 'Noto Sans CJK KR', sans-serif;
    white-space: nowrap;
  }
  .red {
    background: #dc3545;
  }
  .blue {
    background: #007bff;
  }
  footer {
    padding: 16px 0 13px;
    background: #f8f9fa;
    color: #777;
    font-size: 15px;
    text-align: center;
  }
</style>
